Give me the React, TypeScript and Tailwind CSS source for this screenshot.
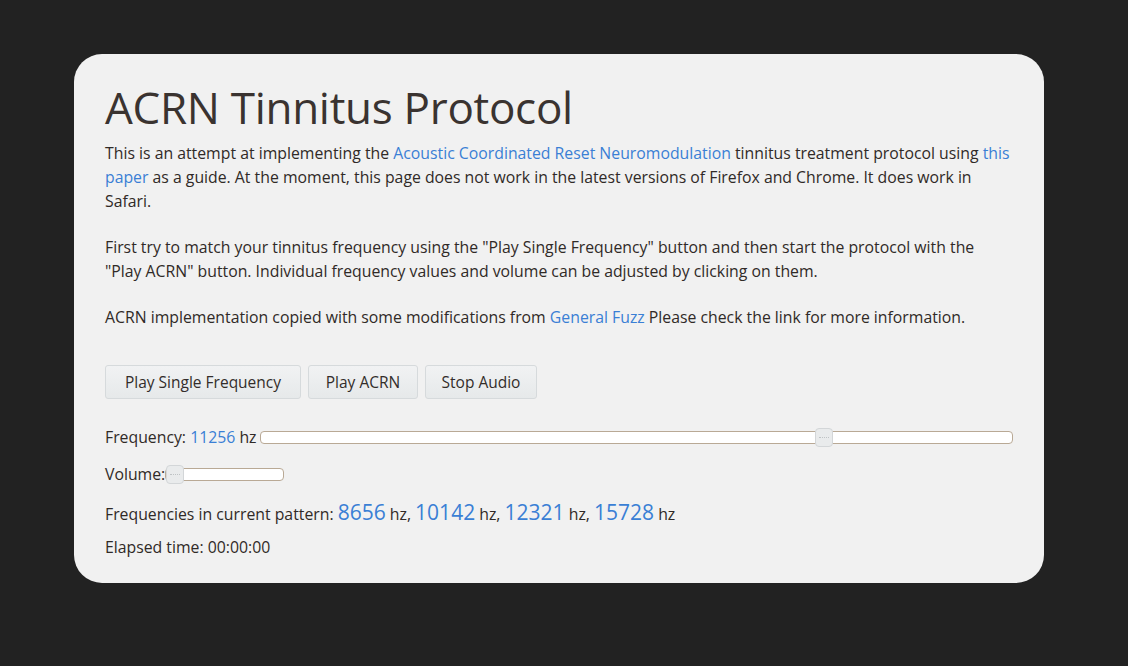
const link = "text-[#3a7fd5]";

function Slider({ width, pos }: { width: string; pos: string }) {
  return (
    <div className={`relative h-[13px] ${width} rounded-[4px] border border-[#b9a995] bg-white`}>
      <div
        className={`absolute top-[-4px] ${pos} flex h-[19px] w-[18px] items-center justify-center rounded-[4px] border border-[#d3d6d8] bg-[#e9ebec]`}
      >
        <div className="w-[10px] border-t border-dotted border-[#bfc3c5]" />
      </div>
    </div>
  );
}

function Btn({ label, w }: { label: string; w: string }) {
  return (
    <button
      className={`h-[34px] ${w} rounded-[3px] border border-[#d6dadc] bg-gradient-to-b from-[#f1f2f3] to-[#e6e9ea] text-[15.5px] text-[#332d2a]`}
    >
      {label}
    </button>
  );
}

export default function App() {
  return (
    <div
      className="min-h-[666px] w-full bg-[#222222] px-[74px] pt-[54px]"
      style={{ fontFamily: '"Open Sans", "Noto Sans", sans-serif' }}
    >
      <div className="w-[970px] rounded-[28px] bg-[#f1f1f1] px-[31px] pb-[24px] pt-[27px] text-[15.8px] leading-[24px] text-[#302a27]">
        <h1 className="mb-[8px] text-[44px] font-normal leading-[52px] tracking-[-0.3px] text-[#3a3330]">
          ACRN Tinnitus Protocol
        </h1>
        <p>
          This is an attempt at implementing the{" "}
          <a className={link}>Acoustic Coordinated Reset Neuromodulation</a> tinnitus treatment protocol using{" "}
          <a className={link}>this paper</a> as a guide. At the moment, this page does not work in the latest versions of
          Firefox and Chrome. It does work in Safari.
        </p>
        <p className="mt-[22px]">
          First try to match your tinnitus frequency using the "Play Single Frequency" button and then start the protocol
          with the "Play ACRN" button. Individual frequency values and volume can be adjusted by clicking on them.
        </p>
        <p className="mt-[22px]">
          ACRN implementation copied with some modifications from <a className={link}>General Fuzz</a> Please check the
          link for more information.
        </p>

        <div className="mt-[36px] flex gap-[7px]">
          <Btn label="Play Single Frequency" w="w-[196px]" />
          <Btn label="Play ACRN" w="w-[110px]" />
          <Btn label="Stop Audio" w="w-[112px]" />
        </div>

        <div className="mt-[26px] flex items-center">
          <span className="whitespace-nowrap">
            Frequency: <span className={link}>11256</span> hz
          </span>
          <div className="ml-[3px] flex-1">
            <Slider width="w-full" pos="left-[73.8%]" />
          </div>
        </div>

        <div className="mt-[13px] flex items-center">
          <span>Volume:</span>
          <Slider width="w-[119px]" pos="left-[0px]" />
        </div>

        <div className="mt-[14px] flex items-baseline">
          <span>
            Frequencies in current pattern: <span className={`${link} text-[21px]`}>8656</span> hz,{" "}
            <span className={`${link} text-[21px]`}>10142</span> hz,{" "}
            <span className={`${link} text-[21px]`}>12321</span> hz,{" "}
            <span className={`${link} text-[21px]`}>15728</span> hz
          </span>
        </div>

        <div className="mt-[9px]">Elapsed time: 00:00:00</div>
      </div>
    </div>
  );
}
